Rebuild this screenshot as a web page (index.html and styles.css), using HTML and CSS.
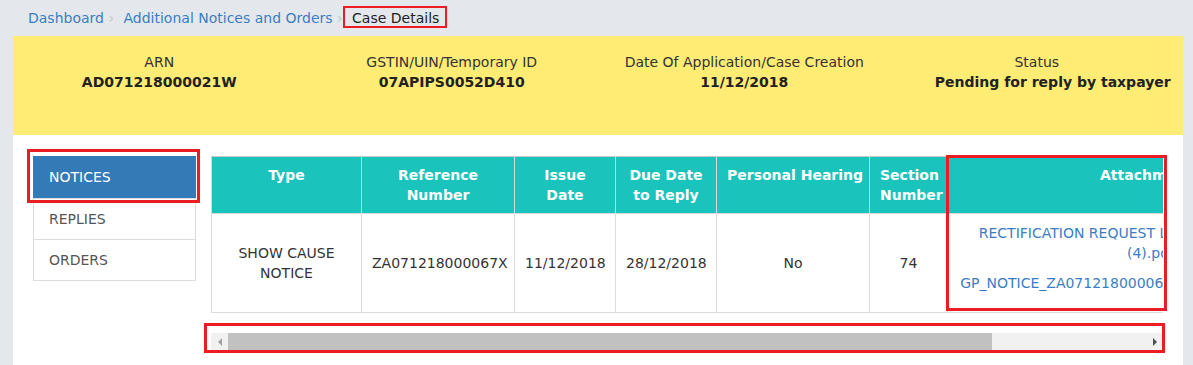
FILE: index.html
```html
<!DOCTYPE html>
<html lang="en">

<head>
    <meta charset="UTF-8">
    <meta name="viewport" content="width=device-width, initial-scale=1.0">
    <title>Case Details | Additional Notices and Orders</title>
    <link rel="stylesheet" href="styles.css">
</head>

<body>
    <div class="page">
        <nav class="breadcrumb">
            <a href="#">Dashboard</a>
            <span class="sep">›</span>
            <a href="#">Additional Notices and Orders</a>
            <span class="sep">›</span>
            <span class="current mark">Case Details</span>
        </nav>

        <section class="case-summary">
            <div class="summary-item">
                <span class="label">ARN</span>
                <strong>AD071218000021W</strong>
            </div>
            <div class="summary-item">
                <span class="label">GSTIN/UIN/Temporary ID</span>
                <strong>07APIPS0052D410</strong>
            </div>
            <div class="summary-item">
                <span class="label">Date Of Application/Case Creation</span>
                <strong>11/12/2018</strong>
            </div>
            <div class="summary-item">
                <span class="label">Status</span>
                <strong class="status">Pending for reply by taxpayer</strong>
            </div>
        </section>

        <main class="case-body">
            <ul class="tabs">
                <li class="active mark">NOTICES</li>
                <li>REPLIES</li>
                <li>ORDERS</li>
            </ul>

            <div class="table-area">
                <div class="table-scroll">
                    <table class="notice-table">
                        <colgroup>
                            <col class="col-type">
                            <col class="col-ref">
                            <col class="col-date">
                            <col class="col-date">
                            <col class="col-hearing">
                            <col class="col-section">
                            <col class="col-attach">
                        </colgroup>
                        <thead>
                            <tr>
                                <th>Type</th>
                                <th>Reference Number</th>
                                <th>Issue Date</th>
                                <th>Due Date to Reply</th>
                                <th class="nowrap">Personal Hearing</th>
                                <th>Section Number</th>
                                <th>Attachments</th>
                            </tr>
                        </thead>
                        <tbody>
                            <tr>
                                <td>SHOW CAUSE NOTICE</td>
                                <td>ZA071218000067X</td>
                                <td>11/12/2018</td>
                                <td>28/12/2018</td>
                                <td>No</td>
                                <td>74</td>
                                <td class="attachments">
                                    <a href="#">RECTIFICATION REQUEST LETTER TEMPLATES_V2 (4).pdf</a>
                                    <a href="#">GP_NOTICE_ZA071218000067X_15445215601234.pdf</a>
                                </td>
                            </tr>
                        </tbody>
                    </table>
                </div>
                <div class="attach-mark"></div>

                <div class="scrollbar mark">
                    <span class="scroll-btn left"></span>
                    <span class="scroll-thumb"></span>
                    <span class="scroll-rest"></span>
                    <span class="scroll-btn right"></span>
                </div>
            </div>
        </main>
    </div>
</body>

</html>
```

FILE: styles.css
```css
:root {
    --page: #e4e8ec;
    --yellow: #ffec74;
    --teal: #1ac3bb;
    --blue: #337ab7;
    --link: #3b7dc4;
    --text: #333333;
    --border: #dddddd;
    --mark: #ec1c24;
}

* {
    margin: 0;
    padding: 0;
    box-sizing: border-box;
}

body {
    font-family: 'DejaVu Sans', Verdana, sans-serif;
    font-size: 14px;
    line-height: 20px;
    background-color: var(--page);
    color: var(--text);
}

a {
    color: var(--link);
    text-decoration: none;
}

.page {
    margin: 0 10px 0 13px;
}

.breadcrumb {
    height: 36px;
    padding: 8px 15px;
    white-space: nowrap;
}

.breadcrumb .sep {
    color: #c4c4c4;
    margin-right: 5px;
}

.breadcrumb .current {
    position: relative;
    color: #222;
}

.breadcrumb .current::after {
    content: '';
    position: absolute;
    left: -9px;
    right: -8px;
    top: -4px;
    bottom: -2px;
    border: 2px solid var(--mark);
}

.case-summary {
    display: grid;
    grid-template-columns: repeat(4, 1fr);
    background-color: var(--yellow);
    padding: 16px 0 43px;
    text-align: center;
}

.summary-item {
    display: flex;
    flex-direction: column;
}

.summary-item .label {
    color: #333;
}

.summary-item strong {
    color: #222;
}

.summary-item .status {
    padding-left: 32px;
}

.case-body {
    display: flex;
    align-items: flex-start;
    gap: 15px;
    background-color: #fff;
    padding: 21px 20px 20px;
    min-height: 230px;
}

.tabs {
    list-style: none;
    width: 163px;
    flex-shrink: 0;
    border: 1px solid var(--border);
    border-top: none;
}

.tabs li {
    padding: 10px 15px;
    border-top: 1px solid var(--border);
    color: #555;
}

.tabs li.active {
    position: relative;
    background-color: var(--blue);
    border-top: none;
    border-left: 1px solid var(--blue);
    margin-left: -1px;
    margin-right: -1px;
    height: 42px;
    padding-top: 11px;
    color: #fff;
}

.tabs li.active::after {
    content: '';
    position: absolute;
    left: -7px;
    right: -4px;
    top: -7px;
    bottom: -5px;
    border: 3px solid var(--mark);
}

.table-area {
    position: relative;
    width: 952px;
}

.table-scroll {
    overflow: hidden;
}

.notice-table {
    table-layout: fixed;
    width: 1142px;
    border-collapse: collapse;
    text-align: center;
}

.col-type { width: 150px; }
.col-ref { width: 153px; }
.col-date { width: 101px; }
.col-hearing { width: 153px; }
.col-section { width: 78px; }
.col-attach { width: 406px; }

.notice-table th,
.notice-table td {
    border: 1px solid var(--border);
    vertical-align: middle;
}

.notice-table th {
    vertical-align: top;
    background-color: var(--teal);
    color: #fff;
    padding: 8px 10px;
    font-weight: 700;
    border-color: #d9d9d9;
    border-top-color: #c8c8c8;
}

.notice-table th.nowrap {
    white-space: nowrap;
}

.notice-table td {
    padding: 9px 10px;
}

.attachments a {
    display: block;
    margin-bottom: 10px;
    color: var(--link);
}

.attach-mark {
    position: absolute;
    left: 735px;
    top: -1px;
    width: 221px;
    height: 156px;
    border: 3px solid var(--mark);
    pointer-events: none;
}

.scrollbar {
    position: relative;
    display: flex;
    height: 17px;
    margin-top: 20px;
    background-color: #f1f1f1;
}

.scrollbar::after {
    content: '';
    position: absolute;
    left: -7px;
    right: -2px;
    top: -10px;
    bottom: -3px;
    border: 3px solid var(--mark);
}

.scroll-btn {
    width: 17px;
    flex-shrink: 0;
    display: flex;
    align-items: center;
    justify-content: center;
}

.scroll-btn::before {
    content: '';
    width: 0;
    height: 0;
    border-top: 4px solid transparent;
    border-bottom: 4px solid transparent;
}

.scroll-btn.left::before {
    border-right: 4px solid #a3a3a3;
}

.scroll-btn.right::before {
    border-left: 4px solid #505050;
}

.scroll-thumb {
    width: 764px;
    background-color: #c1c1c1;
}

.scroll-rest {
    flex: 1;
}
```
